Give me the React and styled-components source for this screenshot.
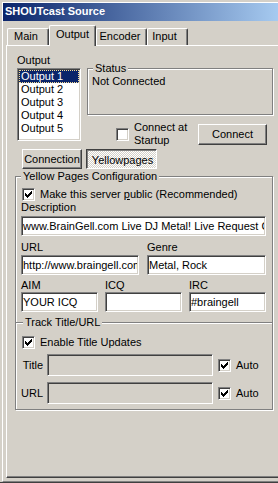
import React from 'react';
import styled, { createGlobalStyle } from 'styled-components';

const GlobalStyle = createGlobalStyle`
  html, body {
    margin: 0;
    padding: 0;
    width: 278px;
    height: 483px;
    overflow: hidden;
    background: #d4d0c8;
  }
  body {
    font-family: "Liberation Sans", Arial, sans-serif;
    font-size: 11px;
    color: #000;
  }
`;

const Window = styled.div`
  width: 278px;
  height: 483px;
  overflow: hidden;
  box-sizing: border-box;
  background: #d4d0c8;
  padding: 2px 0 0 2px;
  border-bottom: 1px solid #404040;
`;

const Frame = styled.div`
  height: 100%;
  box-sizing: border-box;
  border-left: 1px solid #fff;
  border-top: 1px solid #fff;
  border-bottom: 1px solid #808080;
`;

const TitleBar = styled.div`
  height: 18px;
  line-height: 16px;
  padding-left: 2px;
  background: linear-gradient(to right, #0a246a 0%, #a6caf0 100%);
  color: #fff;
  font-weight: bold;
  font-size: 11px;
  white-space: nowrap;
`;

const TabArea = styled.div`
  margin: 4px 0 0 3px;
`;

const TabStrip = styled.div`
  display: flex;
  align-items: flex-end;
  padding-left: 1px;
  height: 20px;
`;

const Tab = styled.div`
  box-sizing: border-box;
  width: ${p => p.$w}px;
  height: ${p => (p.$active ? 21 : 17)}px;
  margin-bottom: ${p => (p.$active ? -1 : 0)}px;
  position: relative;
  z-index: ${p => (p.$active ? 1 : 0)};
  background: #d4d0c8;
  border-top: 1px solid #fff;
  border-left: 1px solid #fff;
  border-right: 1px solid #404040;
  border-radius: 2px 2px 0 0;
  box-shadow: inset -1px 0 0 #808080;
  padding-top: ${p => (p.$active ? 2 : 1)}px;
  padding-right: ${p => p.$nudge || 0}px;
  line-height: 13px;
  text-align: center;
  white-space: nowrap;
`;

const Panel = styled.div`
  height: 433px;
  box-sizing: border-box;
  border-top: 1px solid #fff;
  border-left: 1px solid #fff;
  border-bottom: 1px solid #404040;
  box-shadow: inset 0 -1px 0 #808080;
  padding: 8px 0 0 8px;
`;

const TopArea = styled.div`
  display: flex;
  margin-left: 2px;
  height: 93px;
`;

const LeftCol = styled.div`
  width: 64px;
  display: flex;
  flex-direction: column;
`;

const Caption = styled.div`
  line-height: 13px;
  height: 13px;
  white-space: nowrap;
`;

const ListBox = styled.div`
  margin-top: 1px;
  height: 73px;
  box-sizing: border-box;
  background: #fff;
  border: 1px solid;
  border-color: #808080 #fff #fff #808080;
  box-shadow: inset 1px 1px 0 #404040, inset -1px -1px 0 #d4d0c8;
  padding: 1px;
`;

const ListItem = styled.div`
  height: 13px;
  line-height: 13px;
  padding-left: 2px;
  white-space: nowrap;
  background: ${p => (p.$selected ? '#0a246a' : 'transparent')};
  color: ${p => (p.$selected ? '#fff' : '#000')};
  outline: ${p => (p.$selected ? '1px dotted #f5db95' : 'none')};
  outline-offset: -1px;
`;

const RightCol = styled.div`
  margin-left: 6px;
  width: 186px;
  display: flex;
  flex-direction: column;
`;

const GroupBox = styled.div`
  box-sizing: border-box;
  border: 1px solid #808080;
  box-shadow: 1px 1px 0 #fff, inset 1px 1px 0 #fff;
  margin-top: ${p => p.$top || 0}px;
  padding: ${p => p.$pad || '0'};
  ${p => (p.$h ? `height: ${p.$h}px;` : '')}
  ${p => (p.$w ? `width: ${p.$w}px;` : '')}
`;

const GroupTitle = styled.div`
  display: table;
  margin: -7px 0 0 ${p => p.$indent || 0}px;
  padding: 0 2px;
  background: #d4d0c8;
  line-height: 13px;
  white-space: nowrap;
`;

const Text = styled.div`
  line-height: 13px;
  white-space: nowrap;
`;

const ConnectRow = styled.div`
  display: flex;
  align-items: center;
  height: 26px;
  margin-top: 6px;
`;

const Box = styled.div`
  flex: none;
  width: 13px;
  height: 13px;
  box-sizing: border-box;
  background: #fff;
  border: 1px solid;
  border-color: #808080 #fff #fff #808080;
  box-shadow: inset 1px 1px 0 #404040, inset -1px -1px 0 #d4d0c8;
  padding: 2px;
  margin-left: ${p => p.$ml || 0}px;
  svg {
    display: block;
  }
`;

const CheckLabel = styled.div`
  margin-left: 5px;
  line-height: 13px;
  white-space: nowrap;
`;

const Button = styled.div`
  flex: none;
  box-sizing: border-box;
  width: ${p => p.$w}px;
  height: ${p => p.$h || 20}px;
  display: flex;
  align-items: center;
  justify-content: center;
  white-space: nowrap;
  border: 1px solid;
  border-color: ${p => (p.$pressed ? '#404040 #fff #fff #404040' : '#fff #404040 #404040 #fff')};
  box-shadow: ${p => (p.$pressed ? 'inset 1px 1px 0 #808080' : 'inset -1px -1px 0 #808080')};
  background: ${p =>
    p.$pressed
      ? 'conic-gradient(#fff 25%, #d4d0c8 0 50%, #fff 0 75%, #d4d0c8 0) 0 0 / 2px 2px'
      : '#d4d0c8'};
  padding: ${p => (p.$pressed ? '2px 0 0 2px' : '0')};
`;

const ConnectButton = styled(Button)`
  margin-left: auto;
  margin-right: 6px;
`;

const ButtonRow = styled.div`
  display: flex;
  gap: 4px;
  margin: 2px 0 0 7px;
`;

const YellowGroup = styled(GroupBox)`
  width: 258px;
  margin-top: 7px;
  padding: 0 6px 0 5px;
`;

const CheckRow = styled.div`
  display: flex;
  align-items: center;
  margin-top: ${p => p.$top || 0}px;
  margin-left: ${p => p.$ml || 0}px;
`;

const FieldLabel = styled.div`
  line-height: 13px;
  height: 13px;
  margin-top: ${p => p.$top || 0}px;
  white-space: nowrap;
`;

const Edit = styled.input`
  display: block;
  box-sizing: border-box;
  width: ${p => (p.$w ? `${p.$w}px` : '100%')};
  height: ${p => p.$h || 20}px;
  margin: ${p => p.$top || 0}px 0 0 0;
  padding: 0 1px;
  font: inherit;
  color: #000;
  background: ${p => (p.disabled ? '#d4d0c8' : '#fff')};
  border: 1px solid;
  border-color: #808080 #fff #fff #808080;
  box-shadow: inset 1px 1px 0 #404040, inset -1px -1px 0 #d4d0c8;
  outline: none;
  border-radius: 0;
`;

const FieldGrid = styled.div`
  display: grid;
  grid-template-columns: ${p => p.$cols};
  column-gap: ${p => p.$gap}px;
  margin-top: ${p => p.$top || 0}px;
`;

const TrackGroup = styled(GroupBox)`
  margin: 10px -7px -1px -6px;
  padding: 0 6px 5px 6px;
`;

const TrackRow = styled.div`
  display: flex;
  align-items: center;
  margin-top: ${p => p.$top}px;
`;

const RowLabel = styled.div`
  width: 22px;
  margin: 0 4px 0 -1px;
  text-align: right;
  line-height: 13px;
  white-space: nowrap;
`;

const CheckMark = () => (
  <svg width="7" height="7" viewBox="0 0 7 7" shapeRendering="crispEdges">
    <path
      d="M0 2h1v3H0zM1 3h1v3H1zM2 4h1v3H2zM3 3h1v3H3zM4 2h1v3H4zM5 1h1v3H5zM6 0h1v3H6z"
      fill="#000"
    />
  </svg>
);

const Checkbox = ({ checked, ml }) => <Box $ml={ml}>{checked && <CheckMark />}</Box>;

const outputs = ['Output 1', 'Output 2', 'Output 3', 'Output 4', 'Output 5'];

export default function App() {
  return (
    <>
      <GlobalStyle />
      <Window>
        <Frame>
          <TitleBar>SHOUTcast Source</TitleBar>
          <TabArea>
            <TabStrip>
              <Tab $w={42} $nudge={4}>Main</Tab>
              <Tab $w={47} $active>Output</Tab>
              <Tab $w={51} $nudge={3}>Encoder</Tab>
              <Tab $w={41} $nudge={6}>Input</Tab>
            </TabStrip>
            <Panel>
              <TopArea>
                <LeftCol>
                  <Caption>Output</Caption>
                  <ListBox>
                    {outputs.map((o, i) => (
                      <ListItem key={o} $selected={i === 0}>
                        {o}
                      </ListItem>
                    ))}
                  </ListBox>
                </LeftCol>
                <RightCol>
                  <GroupBox $top={14} $h={47} $pad="0 4px">
                    <GroupTitle $indent={1}>Status</GroupTitle>
                    <Text>Not Connected</Text>
                  </GroupBox>
                  <ConnectRow>
                    <Checkbox ml={29} />
                    <CheckLabel>
                      Connect at
                      <br />
                      Startup
                    </CheckLabel>
                    <ConnectButton $w={69} $h={21}>
                      Connect
                    </ConnectButton>
                  </ConnectRow>
                </RightCol>
              </TopArea>

              <ButtonRow>
                <Button $w={60}>Connection</Button>
                <Button $w={71} $pressed>
                  Yellowpages
                </Button>
              </ButtonRow>

              <YellowGroup>
                <GroupTitle>Yellow Pages Configuration</GroupTitle>
                <CheckRow $top={5} $ml={1}>
                  <Checkbox checked />
                  <CheckLabel>
                    Make this server <u>p</u>ublic (Recommended)
                  </CheckLabel>
                </CheckRow>
                <FieldLabel>Description</FieldLabel>
                <Edit
                  $top={2}
                  readOnly
                  value="www.BrainGell.com Live DJ Metal! Live Request Chat"
                />

                <FieldGrid $cols="118px 119px" $gap={8} $top={5}>
                  <div>
                    <FieldLabel>URL</FieldLabel>
                    <Edit $top={1} readOnly value="http://www.braingell.com" />
                  </div>
                  <div>
                    <FieldLabel>Genre</FieldLabel>
                    <Edit $top={1} readOnly value="Metal, Rock" />
                  </div>
                </FieldGrid>

                <FieldGrid $cols="77px 77px 77px" $gap={7} $top={4}>
                  <div>
                    <FieldLabel>AIM</FieldLabel>
                    <Edit readOnly value="YOUR ICQ" />
                  </div>
                  <div>
                    <FieldLabel>ICQ</FieldLabel>
                    <Edit readOnly value="" />
                  </div>
                  <div>
                    <FieldLabel>IRC</FieldLabel>
                    <Edit readOnly value="#braingell" />
                  </div>
                </FieldGrid>

                <TrackGroup>
                  <GroupTitle $indent={1}>Track Title/URL</GroupTitle>
                  <CheckRow $top={7}>
                    <Checkbox checked />
                    <CheckLabel>Enable Title Updates</CheckLabel>
                  </CheckRow>
                  <TrackRow $top={5}>
                    <RowLabel>Title</RowLabel>
                    <Edit $w={166} $h={22} disabled value="" />
                    <Checkbox checked ml={5} />
                    <CheckLabel>Auto</CheckLabel>
                  </TrackRow>
                  <TrackRow $top={6}>
                    <RowLabel>URL</RowLabel>
                    <Edit $w={166} $h={22} disabled value="" />
                    <Checkbox checked ml={5} />
                    <CheckLabel>Auto</CheckLabel>
                  </TrackRow>
                </TrackGroup>
              </YellowGroup>
            </Panel>
          </TabArea>
        </Frame>
      </Window>
    </>
  );
}
